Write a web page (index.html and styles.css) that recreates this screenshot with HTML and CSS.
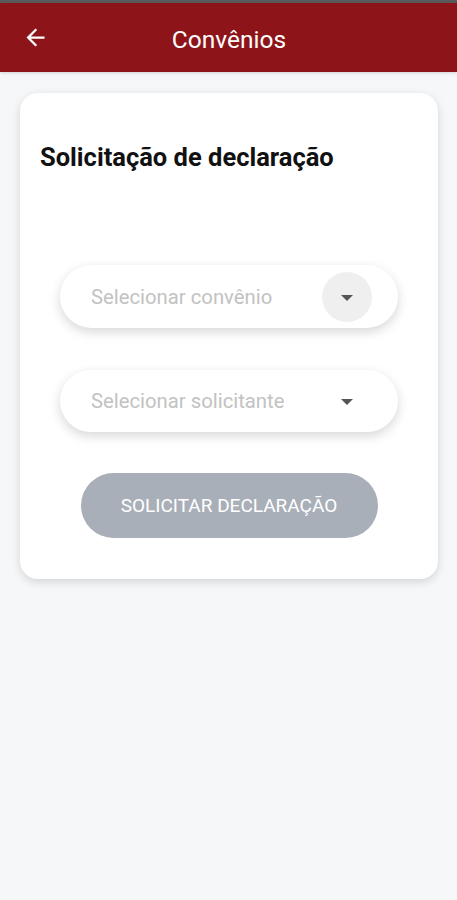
FILE: index.html
```html
<!DOCTYPE html>
<html>
<head>
	<title>Convênios</title>
	<link rel="stylesheet" href="styles.css">
</head>
<body>
	<div class="status-strip"></div>
	<header class="app-bar">
		<span class="back-btn">
			<svg width="27" height="27" viewBox="0 0 24 24"><path d="M20 11H7.83l5.59-5.59L12 4l-8 8 8 8 1.41-1.41L7.83 13H20v-2z" fill="#fff"/></svg>
		</span>
		<h1 class="app-title">Convênios</h1>
	</header>

	<section class="card">
		<h2 class="card-title">Solicitação de declaração</h2>

		<div class="select-bx">
			<span class="placeholder">Selecionar convênio</span>
			<span class="caret-bx focused"><span class="caret"></span></span>
		</div>
		<div class="select-bx">
			<span class="placeholder">Selecionar solicitante</span>
			<span class="caret-bx"><span class="caret"></span></span>
		</div>

		<div class="btn-row">
			<button class="btn-submit" disabled>Solicitar declaração</button>
		</div>
	</section>
</body>
</html>
```

FILE: styles.css
```css
*{
	margin: 0;
	padding: 0;
	box-sizing: border-box;
	font-family: Roboto, "Liberation Sans", sans-serif;
}
body{
	background-color: #f6f7f9;
	width: 457px;
	min-height: 900px;
}
.status-strip{
	height: 3px;
	background-color: #5b5b5b;
}
.app-bar{
	height: 69px;
	background-color: #8d1519;
	display: flex;
	align-items: center;
	position: relative;
	box-shadow: 0 1px 3px rgba(0,0,0,0.15);
}
.back-btn{
	position: absolute;
	left: 22px;
	top: 21px;
	display: flex;
}
.app-title{
	flex: 1;
	text-align: center;
	color: #fff;
	font-size: 24.5px;
	font-weight: 400;
	padding: 4px 0 0 1px;
}
.card{
	margin: 21px 19px 0 20px;
	background: #fff;
	border-radius: 18px;
	box-shadow: 0 3px 10px rgba(0,0,0,0.14);
	padding: 50px 20px 41px;
}
.card-title{
	font-size: 25.5px;
	font-weight: 700;
	color: #111;
	line-height: 28px;
	margin-bottom: 94px;
}
.select-bx{
	margin: 0 20px 42px;
	height: 63px;
	border-radius: 32px;
	background: #fff;
	box-shadow: 0 4px 12px rgba(0,0,0,0.16);
	display: flex;
	align-items: center;
	padding: 0 26px 0 31px;
}
.select-bx + .select-bx{
	height: 62px;
	margin-bottom: 41px;
}
.placeholder{
	flex: 1;
	font-size: 20.3px;
	color: #c2c2c2;
}
.caret-bx{
	width: 50px;
	height: 50px;
	border-radius: 50%;
	display: flex;
	align-items: center;
	justify-content: center;
}
.caret-bx.focused{
	background: #efefef;
}
.caret{
	width: 0;
	height: 0;
	border-left: 6px solid transparent;
	border-right: 6px solid transparent;
	border-top: 6px solid #555;
	margin-top: 2px;
}
.btn-row{
	display: flex;
	justify-content: center;
}
.btn-submit{
	width: 297px;
	height: 65px;
	border: 0;
	border-radius: 33px;
	background: #a9afb8;
	color: #fff;
	font-size: 19px;
	text-transform: uppercase;
}
```
